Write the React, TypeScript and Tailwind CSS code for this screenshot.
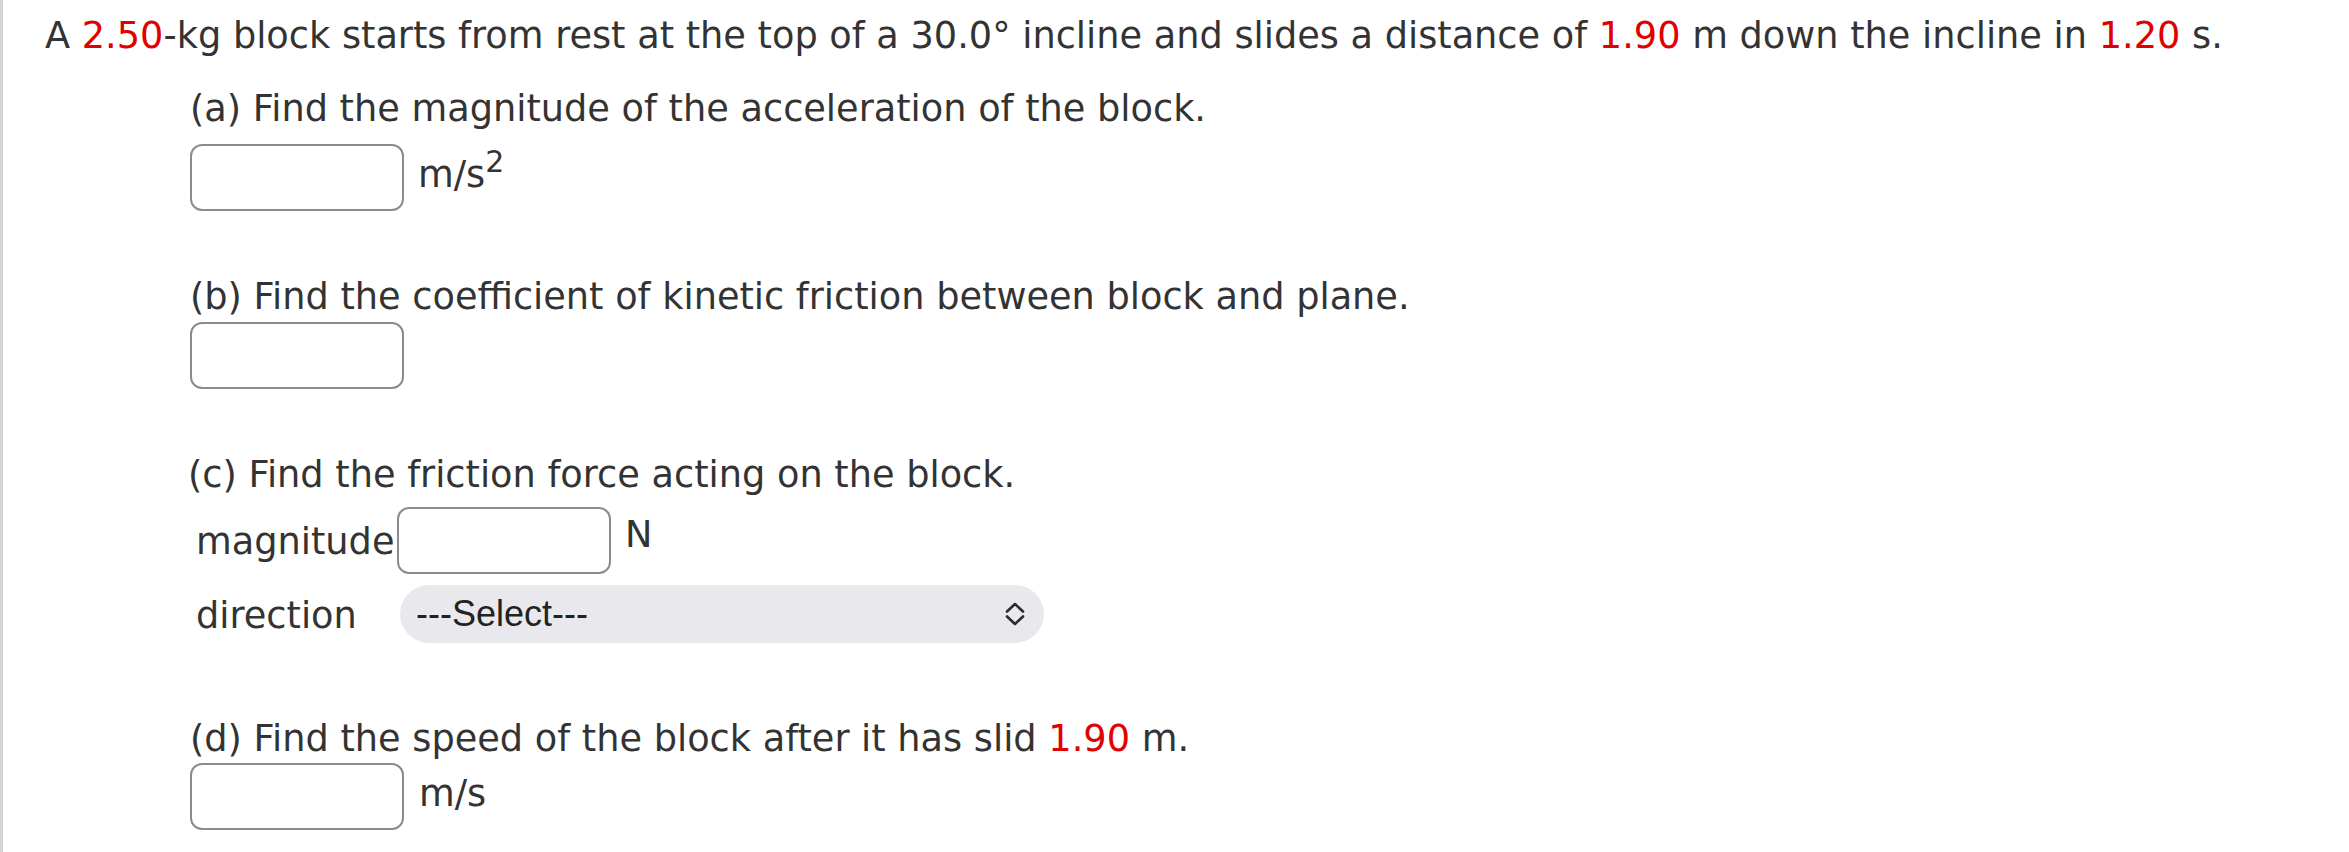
import { useState } from "react";

const Red = ({ children }: { children: React.ReactNode }) => (
  <span className="text-[#e00000]">{children}</span>
);

const Box = () => (
  <div className="w-[214px] h-[67px] shrink-0 rounded-[12px] border-2 border-[#8c8c8c] bg-white" />
);

const Chevrons = () => (
  <svg width="24" height="28" viewBox="0 0 24 28" fill="none">
    <path d="M4 11.5 L12 4 L20 11.5" stroke="#2b2b2b" strokeWidth="2.6" strokeLinecap="round" strokeLinejoin="round" />
    <path d="M4 16.5 L12 24 L20 16.5" stroke="#2b2b2b" strokeWidth="2.6" strokeLinecap="round" strokeLinejoin="round" />
  </svg>
);

const App = () => {
  const [choice] = useState("---Select---");
  return (
    <div className="min-h-[852px] border-l-[3px] border-[#d4d4d4] bg-white text-[#333333] font-['DejaVu_Sans',sans-serif] text-[36.7px] leading-[52px]">
      <div className="pl-[42px] pt-[10px]">
        A <Red>2.50</Red>-kg block starts from rest at the top of a 30.0° incline and slides a distance of{" "}
        <Red>1.90</Red> m down the incline in <Red>1.20</Red> s.
      </div>

      <div className="pl-[187px]">
        {/* (a) */}
        <div className="mt-[18px] pt-[3px]">(a) Find the magnitude of the acceleration of the block.</div>
        <div className="mt-[9px] flex items-start">
          <Box />
          <span className="ml-[14px] mt-[5px]">
            m/s<span className="text-[30px] relative -top-[15px]">2</span>
          </span>
        </div>

        {/* (b) */}
        <div className="mt-[57px] pt-[3px]">(b) Find the coefficient of kinetic friction between block and plane.</div>
        <div className="-mt-[1px] flex">
          <Box />
        </div>

        {/* (c) */}
        <div className="mt-[57px] pt-[3px] -ml-[2px]">(c) Find the friction force acting on the block.</div>
        <div className="mt-[6px] flex items-start">
          <span className="w-[207px] shrink-0 pl-[6px] mt-[9px]">magnitude</span>
          <Box />
          <span className="ml-[14px] mt-[2px]">N</span>
        </div>
        <div className="mt-[11px] flex items-center">
          <span className="w-[210px] shrink-0 pl-[6px] mt-[4px]">direction</span>
          <div className="w-[644px] h-[58px] rounded-full bg-[#e9e9ed] flex items-center justify-between pl-[16px] pr-[17px] font-['Liberation_Sans',Arial,sans-serif] text-[36px] text-[#222222]">
            <span>{choice}</span>
            <Chevrons />
          </div>
        </div>

        {/* (d) */}
        <div className="mt-[67px] pt-[3px]">
          (d) Find the speed of the block after it has slid <Red>1.90</Red> m.
        </div>
        <div className="-mt-[2px] flex items-start">
          <Box />
          <span className="ml-[15px] mt-[5px]">m/s</span>
        </div>
      </div>
    </div>
  );
};

export default App;
